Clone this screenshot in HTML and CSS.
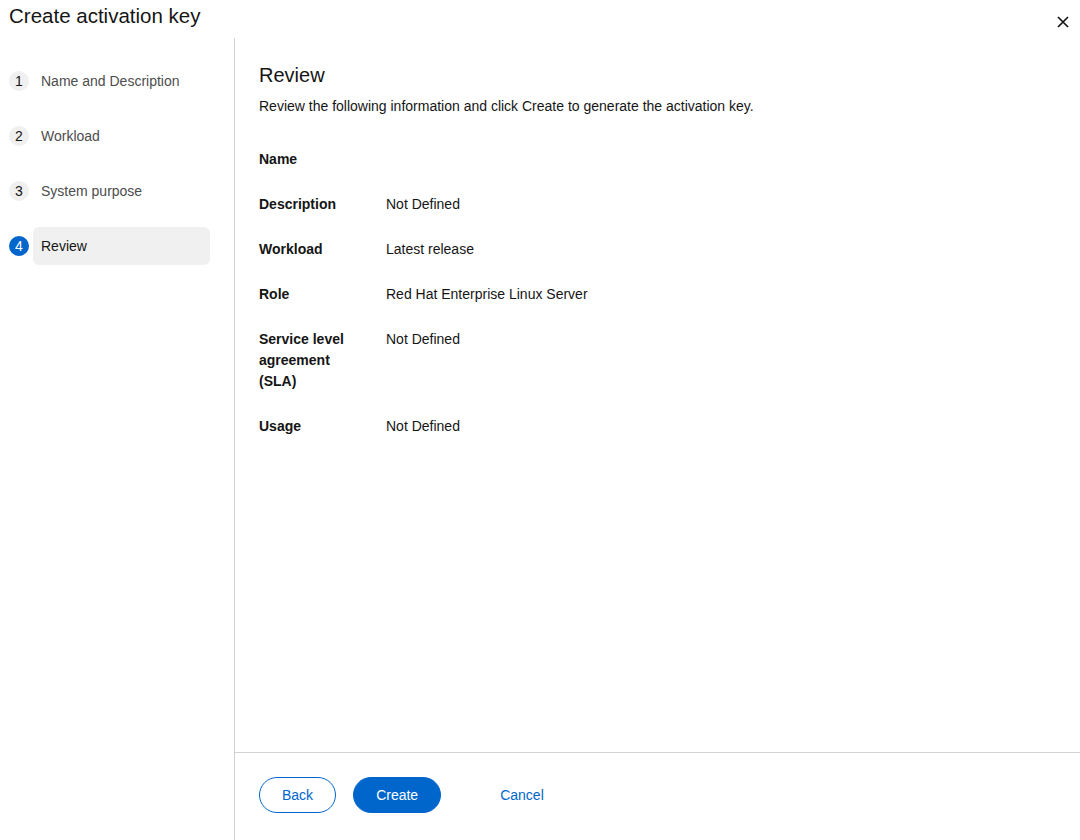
FILE: index.html
```html
<!DOCTYPE html>
<html lang="en">
<head>
    <meta charset="UTF-8">
    <meta name="viewport" content="width=device-width, initial-scale=1.0">
    <title>Create activation key</title>
    <link rel="stylesheet" href="styles.css">
</head>
<body>
    <div class="modal">
        <header class="modal-header">
            <h1 class="modal-title">Create activation key</h1>
            <button type="button" class="close-btn" aria-label="Close">
                <svg width="12" height="12" viewBox="0 0 12 12">
                    <path d="M1 1 L11 11 M11 1 L1 11" stroke="#151515" stroke-width="1.7" fill="none"/>
                </svg>
            </button>
        </header>

        <div class="wizard">
            <!-- step list -->
            <nav class="wizard-nav">
                <ol class="steps">
                    <li class="step">
                        <span class="step-num">1</span>
                        <span class="step-link">Name and Description</span>
                    </li>
                    <li class="step">
                        <span class="step-num">2</span>
                        <span class="step-link">Workload</span>
                    </li>
                    <li class="step">
                        <span class="step-num">3</span>
                        <span class="step-link">System purpose</span>
                    </li>
                    <li class="step current">
                        <span class="step-num">4</span>
                        <span class="step-link">Review</span>
                    </li>
                </ol>
            </nav>

            <div class="wizard-main">
                <div class="wizard-body">
                    <h2 class="review-title">Review</h2>
                    <p class="review-text">Review the following information and click Create to generate the activation key.</p>

                    <dl class="review-list">
                        <dt>Name</dt>
                        <dd></dd>
                        <dt>Description</dt>
                        <dd>Not Defined</dd>
                        <dt>Workload</dt>
                        <dd>Latest release</dd>
                        <dt>Role</dt>
                        <dd>Red Hat Enterprise Linux Server</dd>
                        <dt>Service level agreement (SLA)</dt>
                        <dd>Not Defined</dd>
                        <dt>Usage</dt>
                        <dd>Not Defined</dd>
                    </dl>
                </div>

                <footer class="wizard-footer">
                    <button type="button" class="btn btn-secondary">Back</button>
                    <button type="button" class="btn btn-primary">Create</button>
                    <button type="button" class="btn btn-link">Cancel</button>
                </footer>
            </div>
        </div>
    </div>
</body>
</html>
```

FILE: styles.css
```css
* {
    box-sizing: border-box;
}

body {
    margin: 0;
    font-family: 'Liberation Sans', Arial, sans-serif;
    font-size: 14px;
    line-height: 21px;
    color: #151515;
    background-color: #ffffff;
}

.modal {
    display: flex;
    flex-direction: column;
    height: 840px;
}

.modal-header {
    display: flex;
    justify-content: space-between;
    align-items: flex-start;
    height: 38px;
    padding: 2px 0 0 9px;
}

.modal-title {
    margin: 0;
    font-size: 20.5px;
    line-height: 27px;
    font-weight: 400;
}

.close-btn {
    background: none;
    border: none;
    padding: 0;
    width: 24px;
    height: 36px;
    margin-top: 2px;
    margin-right: 5px;
    display: flex;
    align-items: center;
    justify-content: center;
    cursor: pointer;
}

.wizard {
    flex: 1;
    display: flex;
    min-height: 0;
}

.wizard-nav {
    width: 235px;
    flex-shrink: 0;
    border-right: 1px solid #d2d2d2;
    padding: 24px 24px 0 9px;
}

.steps {
    list-style: none;
    margin: 0;
    padding: 0;
    display: flex;
    flex-direction: column;
    gap: 17px;
}

.step {
    display: flex;
    align-items: center;
}

.step-num {
    width: 20px;
    height: 20px;
    border-radius: 50%;
    background-color: #f0f0f0;
    color: #151515;
    font-size: 14px;
    line-height: 20px;
    text-align: center;
    margin-right: 4px;
    flex-shrink: 0;
}

.step-link {
    flex: 1;
    padding: 8.5px 8px;
    border-radius: 6px;
    color: #4d4d4d;
}

.step.current .step-num {
    background-color: #0066cc;
    color: #ffffff;
}

.step.current .step-link {
    background-color: #f0f0f0;
    color: #151515;
}

.wizard-main {
    flex: 1;
    display: flex;
    flex-direction: column;
}

.wizard-body {
    flex: 1;
    padding: 24px 24px 0 24px;
}

.review-title {
    margin: 0 0 8px 0;
    font-size: 20px;
    line-height: 26px;
    font-weight: 400;
}

.review-text {
    margin: 0 0 32px 0;
}

.review-list {
    display: grid;
    grid-template-columns: 103px 1fr;
    column-gap: 24px;
    row-gap: 24px;
    margin: 0;
}

.review-list dt {
    font-weight: 700;
}

.review-list dd {
    margin: 0;
}

.wizard-footer {
    border-top: 1px solid #d2d2d2;
    padding: 24px 24px 27px 24px;
    display: flex;
    align-items: center;
    gap: 17px;
}

.btn {
    font-family: inherit;
    font-size: 14px;
    line-height: 20px;
    height: 36px;
    padding: 7px 22px;
    border-radius: 999px;
    cursor: pointer;
}

.btn-secondary {
    background-color: #ffffff;
    color: #0066cc;
    border: 1px solid #0066cc;
}

.btn-primary {
    background-color: #0066cc;
    color: #ffffff;
    border: 1px solid #0066cc;
}

.btn-link {
    background: none;
    border: none;
    color: #0066cc;
    margin-left: 20px;
}
```
